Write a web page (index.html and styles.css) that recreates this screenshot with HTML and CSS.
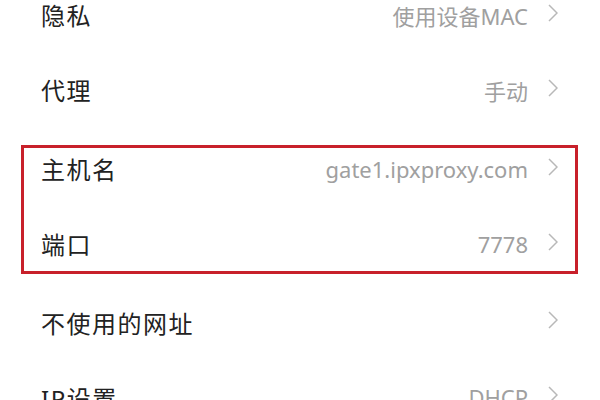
FILE: index.html
```html
<!DOCTYPE html>
<html lang="zh-CN">
<head>
<meta charset="utf-8">
<link rel="stylesheet" href="styles.css">
</head>
<body>
<div class="list">
  <div class="row"><span class="label">隐私</span><span class="value">使用设备MAC</span><svg class="chev" viewBox="0 0 10 18"><path d="M1 1 L9 9 L1 17"/></svg></div>
  <div class="row"><span class="label">代理</span><span class="value">手动</span><svg class="chev" viewBox="0 0 10 18"><path d="M1 1 L9 9 L1 17"/></svg></div>
  <div class="group">
    <div class="row"><span class="label">主机名</span><span class="value">gate1.ipxproxy.com</span><svg class="chev" viewBox="0 0 10 18"><path d="M1 1 L9 9 L1 17"/></svg></div>
    <div class="row"><span class="label">端口</span><span class="value">7778</span><svg class="chev" viewBox="0 0 10 18"><path d="M1 1 L9 9 L1 17"/></svg></div>
  </div>
  <div class="row"><span class="label">不使用的网址</span><span class="value"></span><svg class="chev" viewBox="0 0 10 18"><path d="M1 1 L9 9 L1 17"/></svg></div>
  <div class="row"><span class="label">IP设置</span><span class="value">DHCP</span><svg class="chev" viewBox="0 0 10 18"><path d="M1 1 L9 9 L1 17"/></svg></div>
</div>
</body>
</html>
```

FILE: styles.css
```css
html, body {
  margin: 0;
  padding: 0;
  background: #ffffff;
  width: 600px;
  height: 400px;
  overflow: hidden;
}
.list {
  margin-top: -23px;
  font-family: "Noto Sans", "Noto Sans CJK SC", sans-serif;
}
.row {
  height: 75px;
  display: flex;
  align-items: center;
  padding: 0 42px 0 41px;
}
.label {
  font-size: 24px;
  color: #222222;
  flex: 1;
  letter-spacing: 1.5px;
}
.value {
  font-size: 22px;
  color: #a0a0a0;
  margin-right: 20px;
}
.chev {
  width: 10px;
  height: 18px;
  margin-top: -4px;
  fill: none;
  stroke: #b8b8b8;
  stroke-width: 1.5;
}
.group {
  position: relative;
  padding: 4px 0 3.5px;
}
.group::after {
  content: "";
  position: absolute;
  left: 21px;
  right: 22px;
  top: 18px;
  bottom: 10.5px;
  border: 3px solid #c8202a;
}
```
